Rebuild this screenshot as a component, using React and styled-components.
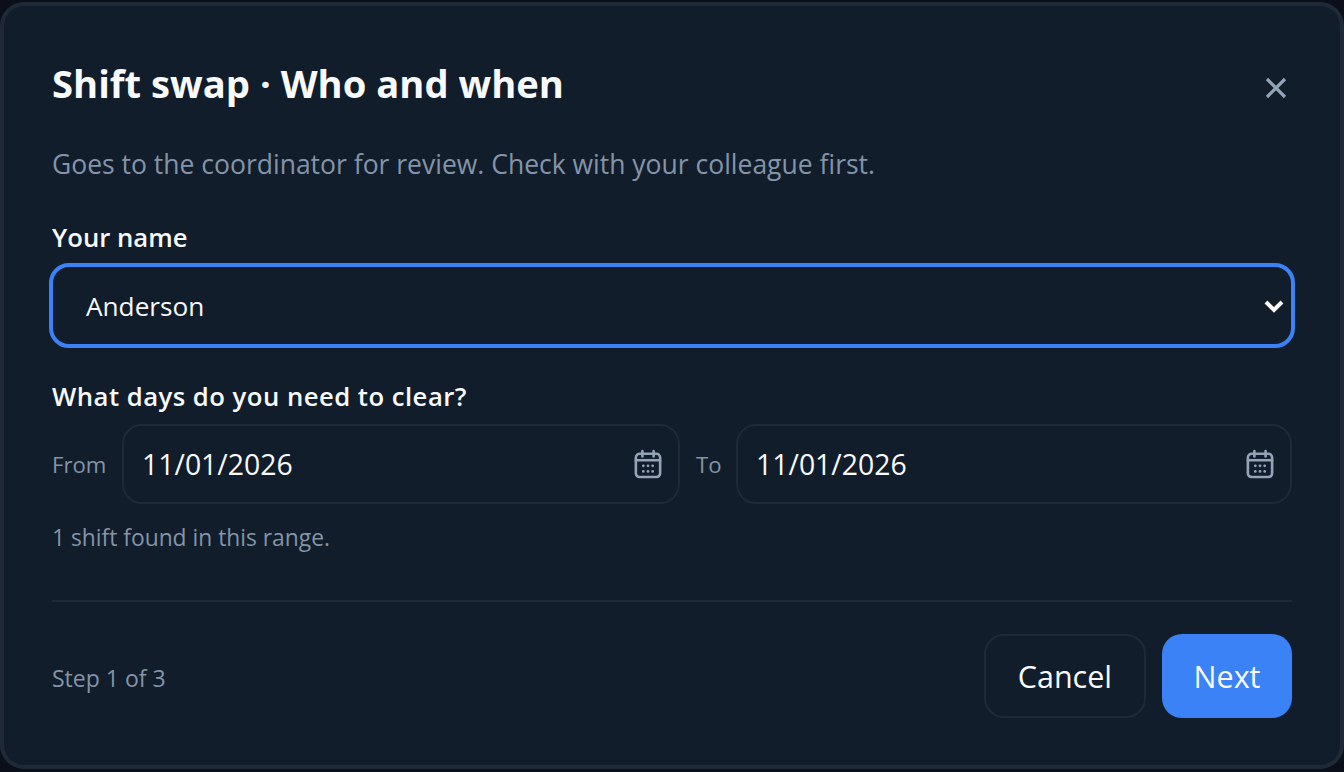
import React from "react";
import styled, { createGlobalStyle } from "styled-components";

const Global = createGlobalStyle`
  html, body { margin: 0; padding: 0; background: #0b0f19; height: 100%; overflow: hidden; }
  body { font-family: "Open Sans", "Noto Sans", sans-serif; }
  * { box-sizing: border-box; }
`;
const Page = styled.div`
  width: 1344px; height: 772px; padding-top: 2px; background: #0b0f19;
`;
const Modal = styled.section`
  width: 1344px; height: 767px; background: #111d2b; border: 4px solid #1f2937; border-radius: 24px;
  padding: 48px 48px 0; display: flex; flex-direction: column;
`;
const Header = styled.header`
  display: flex; justify-content: space-between; align-items: flex-start; height: 60px;
`;
const Title = styled.h2`
  margin: -1px 0 0; font-size: 38.2px; line-height: 60px; font-weight: 700; color: #f8fafc;
`;
const Close = styled.button`
  background: none; border: 0; padding: 0; width: 24px; height: 24px; margin: 22px 4px 0 0; color: #94a3b8; display: flex;
`;
const Sub = styled.p`
  margin: 32px 0 0; font-size: 26.5px; line-height: 36px; color: #8494a8;
`;
const Label = styled.label`
  display: block; font-size: 25.7px; line-height: 36px; font-weight: 600; color: #f8fafc;
  margin-top: ${p => p.$top}px; letter-spacing: ${p => p.$tracking || 0}px;
`;
const SelectWrap = styled.div`
  height: 85px; margin: 7px -3px 0; border: 4.5px solid #3b82f6; border-radius: 20px; display: flex; align-items: center;
  justify-content: space-between; padding: 0 5px 0 33px; color: #f8fafc; font-size: 26.2px;
`;
const DateRow = styled.div`
  display: grid; grid-template-columns: 54px 558px 24px 1fr; align-items: center; margin-top: 9px; column-gap: 16px;
`;
const Small = styled.span`
  font-size: 22.2px; line-height: 32px; padding-top: 2px; color: #8494a8;
`;
const DateField = styled.div`
  height: 80px; border: 2px solid #1f2937; border-radius: 20px; display: flex; align-items: center; justify-content: space-between;
  padding: 0 16px 0 18px; font-size: 28.4px; color: #f8fafc;
`;
const Hint = styled.p`
  margin: 16px 0 0; font-size: 22.8px; line-height: 36px; color: #8494a8;
`;
const Divider = styled.hr`
  margin: 44px 0 0; border: 0; border-top: 2px solid #1f2937;
`;
const Footer = styled.footer`
  display: flex; justify-content: space-between; align-items: center; margin-top: 32px;
`;
const Step = styled.span`
  font-size: 23px; color: #8494a8; padding-top: 3px;
`;
const Actions = styled.div`
  display: flex; gap: 16px;
`;
const Button = styled.button`
  height: 84px; padding: 0 ${p => (p.$primary ? 31.5 : 32)}px; border-radius: 20px; font-family: inherit; font-size: 30.5px;
  color: #f8fafc; background: ${p => (p.$primary ? "#3b82f6" : "transparent")};
  border: ${p => (p.$primary ? "0" : "2px solid #1f2937")};
`;

const CalendarIcon = () => (
  <svg width="28" height="30" viewBox="0 0 30 32" fill="none" stroke="#94a3b8" strokeWidth="2.8" strokeLinecap="round">
    <rect x="2" y="5" width="26" height="25" rx="4" />
    <path d="M2 12h26M9 2v6M21 2v6" />
    <path d="M10 18h.01M15 18h.01M20 18h.01M10 24h.01M15 24h.01M20 24h.01" strokeWidth="3" />
  </svg>
);

export default function App() {
  return (
    <>
      <Global />
      <Page>
        <Modal>
          <Header>
            <Title>Shift swap · Who and when</Title>
            <Close aria-label="Close">
              <svg width="24" height="24" viewBox="0 0 24 24" stroke="currentColor" strokeWidth="3.2"><path d="M3 3l18 18M21 3L3 21" /></svg>
            </Close>
          </Header>
          <Sub>Goes to the coordinator for review. Check with your colleague first.</Sub>
          <Label $top={38}>Your name</Label>
          <SelectWrap>
            Anderson
            <svg width="24" height="24" viewBox="0 0 24 24" fill="none" stroke="#fff" strokeWidth="4"><path d="M4 8l8 8 8-8" /></svg>
          </SelectWrap>
          <Label $top={31} $tracking={0.47}>What days do you need to clear?</Label>
          <DateRow>
            <Small>From</Small>
            <DateField>11/01/2026<CalendarIcon /></DateField>
            <Small>To</Small>
            <DateField>11/01/2026<CalendarIcon /></DateField>
          </DateRow>
          <Hint>1 shift found in this range.</Hint>
          <Divider />
          <Footer>
            <Step>Step 1 of 3</Step>
            <Actions>
              <Button>Cancel</Button>
              <Button $primary>Next</Button>
            </Actions>
          </Footer>
        </Modal>
      </Page>
    </>
  );
}
